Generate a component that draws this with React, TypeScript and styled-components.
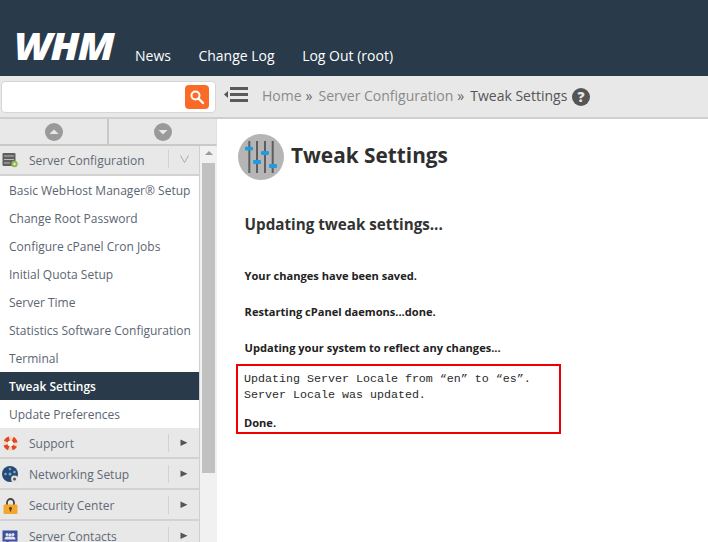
import React from "react";
import styled, { createGlobalStyle } from "styled-components";

const Global = createGlobalStyle`
  html, body { margin: 0; padding: 0; background: #fff; }
  body { font-family: "Open Sans", "Liberation Sans", sans-serif; }
  * { box-sizing: border-box; }
`;
const Page = styled.div`width: 708px; height: 542px; overflow: hidden; display: flex; flex-direction: column;`;
const Header = styled.header`height: 76px; flex: none; background: #293a4a; display: flex; align-items: flex-end; padding: 0 0 0 14px;`;
const Logo = styled.div`
  font: italic 800 37px/30px "Open Sans", sans-serif; color: #fff; width: 101px; height: 30px; margin-bottom: 15px;
  letter-spacing: -1.5px; transform: scaleX(1.1); transform-origin: left; white-space: nowrap;
`;
const Nav = styled.nav`display: flex; gap: 27.5px; margin-left: 20px; height: 28px; align-items: center; margin-bottom: 7px;`;
const NavLink = styled.a`color: #fff; font-size: 14px; white-space: nowrap;`;
const Toolbar = styled.div`height: 43px; flex: none; display: flex; background: #e8e8e8; border-bottom: 2px solid #cfcfcf;`;
const SearchWrap = styled.div`width: 217px; flex: none; padding: 5px 1px 4px 1px;`;
const SearchBox = styled.div`height: 32px; background: #fff; border: 1px solid #d6d6d6; border-radius: 4px; display: flex; justify-content: flex-end; align-items: center; padding-right: 6px;`;
const SearchBtn = styled.div`width: 24px; height: 24px; background: #fb6a26; border-radius: 4px; display: flex; align-items: center; justify-content: center;`;
const Crumbs = styled.div`flex: 1; display: flex; align-items: center; font-size: 14px; color: #8a8a8a; padding-left: 7px; padding-bottom: 2px;`;
const Collapse = styled.svg`width: 24px; height: 20px; margin-right: 14px; position: relative; top: -1px;`;
const Sep = styled.span`margin: 0 6px 0 4px; color: #666;`;
const Current = styled.span`color: #555;`;
const Help = styled.svg`width: 18px; height: 18px; margin-left: 5px; position: relative; top: 1px;`;
const Body = styled.div`flex: 1; display: flex; min-height: 0;`;
const Side = styled.aside`width: 217px; flex: none; display: flex; flex-direction: column; background: #f1f1f1;`;
const Arrows = styled.div`height: 27px; flex: none; display: flex; background: #e8e8e8; border-bottom: 2px solid #c9c9c9; border-right: 1px solid #e0e0e0;`;
const ArrowCell = styled.div<{ $sep?: boolean }>`
  flex: 1; display: flex; align-items: center; justify-content: center;
  ${p => p.$sep && "border-right: 2px solid #c9c9c9;"}
`;
const SideMain = styled.div`flex: 1; display: flex; min-height: 0;`;
const Menu = styled.div`width: 200px; flex: none; background: #fff; border-right: 1px solid #d0d0d0;`;
const Group = styled.div<{ $h: number; $closed?: boolean }>`
  height: ${p => p.$h}px; background: #e8e8e8; border-bottom: 2px solid #d2d2d2; display: flex; align-items: center; position: relative;
  font-size: 12px; color: #5f6a76;
  padding-top: ${p => (p.$closed ? 2 : 0)}px;
`;
const GroupIcon = styled.div`width: 29px; flex: none; display: flex; justify-content: center; padding-right: 9px;`;
const GroupLabel = styled.span`flex: 1; white-space: nowrap;`;
const Caret = styled.div`width: 31px; height: 18px; border-left: 1px solid #d2d2d2; display: flex; align-items: center; justify-content: center; flex: none; position: relative; top: -1px;`;
const Item = styled.div<{ $active?: boolean }>`
  height: 28px; padding-left: 9px; display: flex; align-items: center; font-size: 12px; white-space: nowrap;
  color: ${p => (p.$active ? "#fff" : "#5a6572")};
  background: ${p => (p.$active ? "#293a4a" : "#fff")};
  font-weight: ${p => (p.$active ? 600 : 400)};
`;
const Scroll = styled.div`flex: 1; display: flex; flex-direction: column; align-items: center; padding-top: 5px;`;
const ScrollUp = styled.div`width: 0; height: 0; border-left: 4px solid transparent; border-right: 4px solid transparent; border-bottom: 4px solid #9a9a9a; margin-bottom: 8px;`;
const Thumb = styled.div`width: 13px; height: 310px; background: #c1c1c1;`;
const Main = styled.main`flex: 1; padding: 15px 0 0 19px; color: #333;`;
const TitleRow = styled.div`display: flex; align-items: center; gap: 7px; height: 46px; margin-left: 2px;`;
const Title = styled.h1`margin: 0 0 4px; font-size: 20.8px; font-weight: 700; color: #2f2f2f;`;
const Sub = styled.h2`margin: 33px 0 0 8.6px; height: 22px; line-height: 22px; font-size: 15.2px; font-weight: 700; color: #333;`;
const StatusList = styled.div`margin-top: 26px; display: flex; flex-direction: column; gap: 6px;`;
const Status = styled.p`margin: 0 0 0 8.6px; height: 30px; font: 700 11.08px/30px "Open Sans", sans-serif; color: #222; white-space: nowrap;`;
const ResultBox = styled.div`
  margin-top: 1px; width: 325px; height: 70px; border: 2px solid #ee0000; padding: 5px 0 0 6px; color: #2b2b2b;
  font: 11.67px/16px "Liberation Mono", monospace; white-space: pre;
`;
const Done = styled.div`font: 700 11.08px/16px "Open Sans", sans-serif; margin-top: 12px; color: #222;`;

const Tick = ({ up }: { up?: boolean }) => (
  <svg width="18" height="18" viewBox="0 0 18 18">
    <circle cx="9" cy="9" r="9" fill="#9a9a9a" />
    <path d={up ? "M4.5 11h9L9 6.5z" : "M4.5 7h9L9 11.5z"} fill="#e8e8e8" />
  </svg>
);
const Right = () => (
  <svg width="8" height="8" viewBox="0 0 8 8"><path d="M0.5 0.5v6.5L7.5 3.8z" fill="#555" /></svg>
);

const groups = [
  { label: "Support", icon: <svg width="15" height="15" viewBox="0 0 15 15"><circle cx="7.5" cy="7.5" r="5" fill="none" stroke="#f3dcb8" strokeWidth="4.4" /><circle cx="7.5" cy="7.5" r="5" fill="none" stroke="#e2452e" strokeWidth="4.4" strokeDasharray="4.7 3.15" strokeDashoffset="2.35" transform="rotate(45 7.5 7.5)" /><circle cx="7.5" cy="7.5" r="2.8" fill="#f6f6f6" /></svg> },
  { label: "Networking Setup", icon: <svg width="17" height="18" viewBox="0 0 17 18"><circle cx="8" cy="8" r="8" fill="#254a74" /><g fill="#7fa4c9"><circle cx="8" cy="3" r="1.3" /><circle cx="3.5" cy="8" r="1.3" /><circle cx="8" cy="8" r="1.5" /><circle cx="12.5" cy="6" r="1.3" /></g><circle cx="12.5" cy="13" r="3.4" fill="#e2e2e2" /><circle cx="12.5" cy="13" r="1.5" fill="#555" /></svg> },
  { label: "Security Center", icon: <svg width="15" height="16" viewBox="0 0 15 16"><path d="M4 7V4.5a3.5 3.5 0 0 1 7 0V7" fill="none" stroke="#444" strokeWidth="1.8" /><rect x="0.5" y="6.5" width="14" height="9.5" rx="1.2" fill="#f3a82b" /><circle cx="7.5" cy="10.5" r="1.4" fill="#4a3a1a" /><rect x="6.9" y="10.5" width="1.2" height="3" fill="#4a3a1a" /></svg> },
  { label: "Server Contacts", icon: <svg width="16" height="14" viewBox="0 0 16 14"><rect x="0.5" y="0.5" width="15" height="11" fill="#3f4f9a" /><path d="M2 14l3-3h3z" fill="#3f4f9a" /><g fill="#dfe3f4"><circle cx="5" cy="4.5" r="1.5" /><circle cx="11" cy="4.5" r="1.5" /><circle cx="8" cy="5" r="1.7" /><path d="M2.5 9.5c0-2 1.2-3 2.5-3s2 .6 3 .6 1.7-.6 3-.6 2.5 1 2.5 3z" /></g></svg> },
];

const items = [
  "Basic WebHost Manager® Setup", "Change Root Password", "Configure cPanel Cron Jobs", "Initial Quota Setup",
  "Server Time", "Statistics Software Configuration", "Terminal", "Tweak Settings", "Update Preferences",
];

export default function App() {
  return (
    <Page>
      <Global />
      <Header>
        <Logo>WHM</Logo>
        <Nav>
          <NavLink>News</NavLink>
          <NavLink>Change Log</NavLink>
          <NavLink>Log Out (root)</NavLink>
        </Nav>
      </Header>
      <Toolbar>
        <SearchWrap>
          <SearchBox>
            <SearchBtn>
              <svg width="16" height="16" viewBox="0 0 16 16" fill="none"><circle cx="6.5" cy="6.5" r="4" stroke="#fff" strokeWidth="2" /><path d="M9.5 9.5L14 14" stroke="#fff" strokeWidth="2.4" strokeLinecap="round" /></svg>
            </SearchBtn>
          </SearchBox>
        </SearchWrap>
        <Crumbs>
          <Collapse viewBox="0 0 24 20">
            <path d="M0 9.5l4-3.5v7z" fill="#555" />
            <g fill="#5a5a5a"><rect x="6" y="2" width="18" height="3" /><rect x="6" y="8" width="18" height="3" /><rect x="6" y="14" width="18" height="3" /></g>
          </Collapse>
          <span>Home</span><Sep> »</Sep>
          <span>Server Configuration</span><Sep> »</Sep>
          <Current>Tweak Settings</Current>
          <Help viewBox="0 0 18 18">
            <circle cx="9" cy="9" r="9" fill="#555" />
            <text x="9" y="13.8" textAnchor="middle" fontSize="14" fontWeight="800" fontFamily="Open Sans" fill="#e8e8e8">?</text>
          </Help>
        </Crumbs>
      </Toolbar>
      <Body>
        <Side>
          <Arrows>
            <ArrowCell $sep><Tick up /></ArrowCell>
            <ArrowCell><Tick /></ArrowCell>
          </Arrows>
          <SideMain>
            <Menu>
              <Group $h={30}>
                <GroupIcon>
                  <svg width="16" height="16" viewBox="0 0 16 16"><rect x="0.5" y="1" width="13" height="13" rx="1" fill="#5f5f5f" /><g fill="#bbb"><rect x="2" y="3.5" width="10" height="1" /><rect x="2" y="7" width="10" height="1" /><rect x="2" y="10.5" width="6" height="1" /></g><circle cx="12.5" cy="12" r="3.2" fill="#8dbb4a" /><circle cx="12.5" cy="12" r="1.2" fill="#e8e8e8" /></svg>
                </GroupIcon>
                <GroupLabel>Server Configuration</GroupLabel>
                <Caret><svg width="9" height="8" viewBox="0 0 9 8" fill="none"><path d="M0.5 0.5L4.5 7.5 8.5 0.5" stroke="#aaa" /></svg></Caret>
              </Group>
              {items.map(t => <Item key={t} $active={t === "Tweak Settings"}>{t}</Item>)}
              {groups.map(g => (
                <Group key={g.label} $h={31} $closed>
                  <GroupIcon>{g.icon}</GroupIcon>
                  <GroupLabel>{g.label}</GroupLabel>
                  <Caret><Right /></Caret>
                </Group>
              ))}
            </Menu>
            <Scroll>
              <ScrollUp />
              <Thumb />
            </Scroll>
          </SideMain>
        </Side>
        <Main>
          <TitleRow>
            <svg width="46" height="46" viewBox="0 0 46 46">
              <circle cx="23" cy="23" r="23" fill="#b5b5b5" />
              <g fill="#5e5e5e"><rect x="10.3" y="7" width="2" height="32" /><rect x="18" y="7" width="2" height="32" /><rect x="26" y="7" width="2" height="32" /><rect x="33.7" y="7" width="2" height="32" /></g>
              <g fill="#1f9ce0"><rect x="7" y="12.7" width="8" height="3.8" rx="1" /><rect x="15" y="26" width="8" height="4" rx="1" /><rect x="23" y="17" width="8" height="4" rx="1" /><rect x="31" y="30" width="8" height="4" rx="1" /></g>
            </svg>
            <Title>Tweak Settings</Title>
          </TitleRow>
          <Sub>Updating tweak settings...</Sub>
          <StatusList>
            <Status>Your changes have been saved.</Status>
            <Status>Restarting cPanel daemons...done.</Status>
            <Status>Updating your system to reflect any changes...</Status>
          </StatusList>
          <ResultBox>
            {"Updating Server Locale from “en” to “es”.\nServer Locale was updated."}
            <Done>Done.</Done>
          </ResultBox>
        </Main>
      </Body>
    </Page>
  );
}
